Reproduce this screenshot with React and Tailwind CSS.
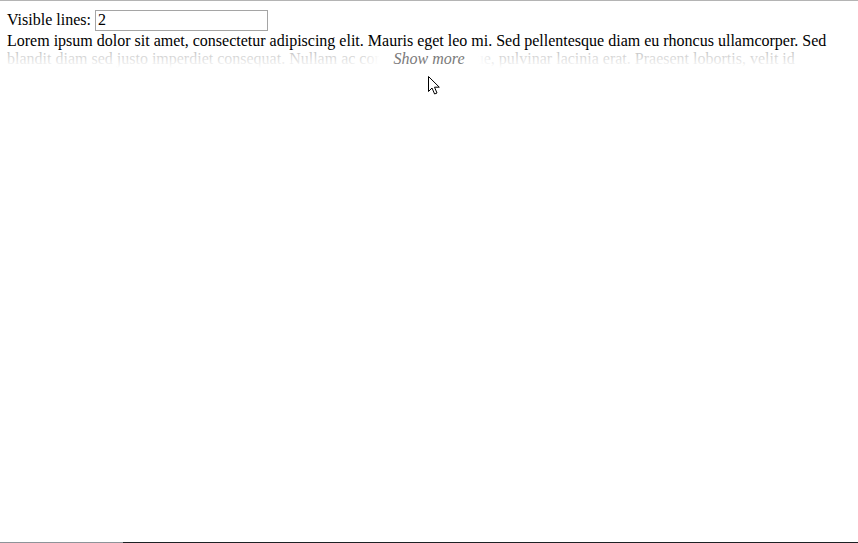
import { useState } from 'react';

const LOREM =
  'Lorem ipsum dolor sit amet, consectetur adipiscing elit. Mauris eget leo mi. Sed pellentesque diam eu rhoncus ullamcorper. Sed blandit diam sed justo imperdiet consequat. Nullam ac congue massa neque, pulvinar lacinia erat. Praesent lobortis, velit id consectetur gravida, eros magna vulputate lorem, a porta nibh nunc vel arcu.';

function Cursor() {
  return (
    <svg
      className="absolute left-[427px] top-[74px]"
      width="14"
      height="21"
      viewBox="0 0 14 21"
    >
      <path
        d="M1.5 1.5 L1.5 16.5 L5 13 L7.6 19 L10 18 L7.5 12.2 L12.3 12.2 Z"
        fill="white"
        stroke="black"
        strokeWidth="1"
        strokeLinejoin="miter"
      />
    </svg>
  );
}

export default function App() {
  const [lines, setLines] = useState('2');

  return (
    <div className="relative h-[543px] flex flex-col bg-white text-black font-['Liberation_Serif','Times_New_Roman',serif] text-[16px] leading-[18px] border-t border-[#b4b4b4]">
      <div className="flex-1 px-[7px] pt-[8px]">
        <div className="flex items-center h-[22px]">
          <label htmlFor="lines">Visible lines:</label>
          <input
            id="lines"
            value={lines}
            onChange={(e) => setLines(e.target.value)}
            className="ml-[4px] w-[173px] h-[21px] border border-[#a5a5a5] px-[2px] outline-none font-['Liberation_Serif',serif] text-[16px]"
          />
        </div>

        <div className="relative h-[36px] overflow-hidden mt-px">
          <p>{LOREM}</p>
          <div className="absolute left-0 right-0 bottom-0 h-[18px] flex justify-center bg-[linear-gradient(to_bottom,rgba(255,255,255,0.74),white)]">
            <button className="px-[30px] italic text-[#7a7a7a] leading-[18px] bg-[linear-gradient(to_right,transparent,white_12%,white_88%,transparent)]">
              Show more
            </button>
          </div>
        </div>
      </div>

      <div className="flex h-px">
        <div className="w-[123px] bg-[#8e9499]" />
        <div className="flex-1 bg-[#1d2124]" />
      </div>

      <Cursor />
    </div>
  );
}
